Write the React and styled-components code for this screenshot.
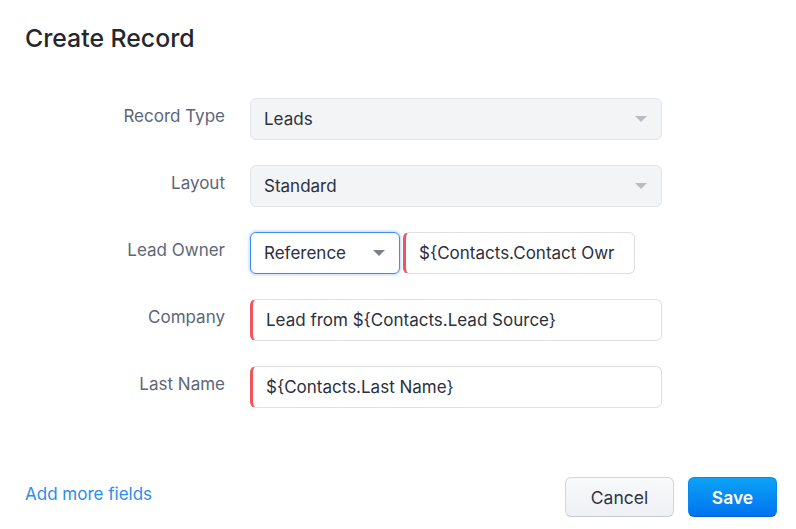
import styled, { createGlobalStyle } from "styled-components";

const COLORS = {
  TEXT: "#2b303b",
  LABEL: "#5d6679",
  BORDER: "#dcdfe5",
  FILL: "#f3f4f6",
  RED: "#f2545b",
  BLUE: "#3d8ef0",
  LINK: "#2d8cf0",
};

const GlobalStyle = createGlobalStyle`
  html, body {
    margin: 0;
    padding: 0;
    background: #ffffff;
  }
  body {
    font-family: "Inter", "Noto Sans", sans-serif;
    color: ${COLORS.TEXT};
  }
`;

const Caret = ({ dark }) => (
  <svg width="12" height="6" viewBox="0 0 12 6">
    <path d="M0 0 L12 0 L6 6 Z" fill={dark ? "#7b7f87" : "#b9bcc3"} />
  </svg>
);

const Select = ({ value, width, focused }) => (
  <SelectBox width={width} focused={focused}>
    <span>{value}</span>
    <Caret dark={focused} />
  </SelectBox>
);

const App = () => {
  return (
    <Page>
      <GlobalStyle />
      <Title>Create Record</Title>
      <Form>
        <Label>Record Type</Label>
        <Select value="Leads" />

        <Label>Layout</Label>
        <Select value="Standard" />

        <Label>Lead Owner</Label>
        <FieldGroup>
          <Select value="Reference" width="150px" focused />
          <RequiredInput width="232px">${"{"}Contacts.Contact Owr</RequiredInput>
        </FieldGroup>

        <Label>Company</Label>
        <RequiredInput>Lead from ${"{"}Contacts.Lead Source{"}"}</RequiredInput>

        <Label>Last Name</Label>
        <RequiredInput>${"{"}Contacts.Last Name{"}"}</RequiredInput>
      </Form>
      <Footer>
        <LinkText>Add more fields</LinkText>
        <ButtonRow>
          <Button>Cancel</Button>
          <Button primary>Save</Button>
        </ButtonRow>
      </Footer>
    </Page>
  );
};

const Page = styled.div`
  display: flex;
  flex-direction: column;
  width: 796px;
  height: 529px;
  box-sizing: border-box;
  padding: 22px 19px 12px 25px;
`;

const Title = styled.h1`
  margin: 0;
  font-size: 24.8px;
  line-height: 32px;
  font-weight: 500;
  color: #24272d;
`;

const Form = styled.div`
  display: grid;
  grid-template-columns: 200px 412px;
  column-gap: 25px;
  row-gap: 25px;
  grid-auto-rows: 42px;
  margin-top: 44px;
`;

const Label = styled.div`
  text-align: right;
  font-size: 17px;
  line-height: 20px;
  padding-top: 8px;
  color: ${COLORS.LABEL};
`;

const FieldGroup = styled.div`
  display: flex;
  gap: 3px;
`;

const SelectBox = styled.div`
  display: flex;
  align-items: center;
  justify-content: space-between;
  box-sizing: border-box;
  width: ${(props) => props.width || "100%"};
  height: 42px;
  padding: 0 14px 0 13px;
  font-size: 17px;
  color: ${COLORS.TEXT};
  background: ${(props) => (props.focused ? "#ffffff" : COLORS.FILL)};
  border: 1px solid ${(props) => (props.focused ? COLORS.BLUE : "#e2e4e9")};
  border-radius: 6px;
  box-shadow: ${(props) =>
    props.focused ? "0 0 3px 1px rgba(61, 142, 240, 0.35)" : "none"};
`;

const RequiredInput = styled.div`
  display: flex;
  align-items: center;
  box-sizing: border-box;
  width: ${(props) => props.width || "100%"};
  height: 42px;
  padding: 0 12px 0 13px;
  font-size: 17px;
  color: ${COLORS.TEXT};
  background: #ffffff;
  border: 1px solid ${COLORS.BORDER};
  border-left: 3px solid ${COLORS.RED};
  border-radius: 6px;
  white-space: nowrap;
  overflow: hidden;
`;

const Footer = styled.div`
  display: flex;
  justify-content: space-between;
  align-items: center;
  margin-top: auto;
`;

const LinkText = styled.span`
  font-size: 17px;
  color: ${COLORS.LINK};
  cursor: pointer;
  padding-bottom: 6px;
`;

const ButtonRow = styled.div`
  display: flex;
  gap: 14px;
`;

const Button = styled.button`
  height: 40px;
  box-sizing: border-box;
  padding: 0;
  width: ${(props) => (props.primary ? "89px" : "109px")};
  font-family: "Inter", "Noto Sans", sans-serif;
  font-size: 17.5px;
  font-weight: ${(props) => (props.primary ? 600 : 400)};
  color: ${(props) => (props.primary ? "#ffffff" : "#2f3440")};
  background: ${(props) =>
    props.primary
      ? "linear-gradient(180deg, #0ca3f7 0%, #0073ef 100%)"
      : "linear-gradient(180deg, #f8f9fb 0%, #eef0f4 100%)"};
  border: 1px solid ${(props) => (props.primary ? "#0a86f2" : "#d3d6de")};
  border-bottom-color: ${(props) => (props.primary ? "#005fd0" : "#c8ccd5")};
  border-radius: 6px;
  cursor: pointer;
`;

export default App;
